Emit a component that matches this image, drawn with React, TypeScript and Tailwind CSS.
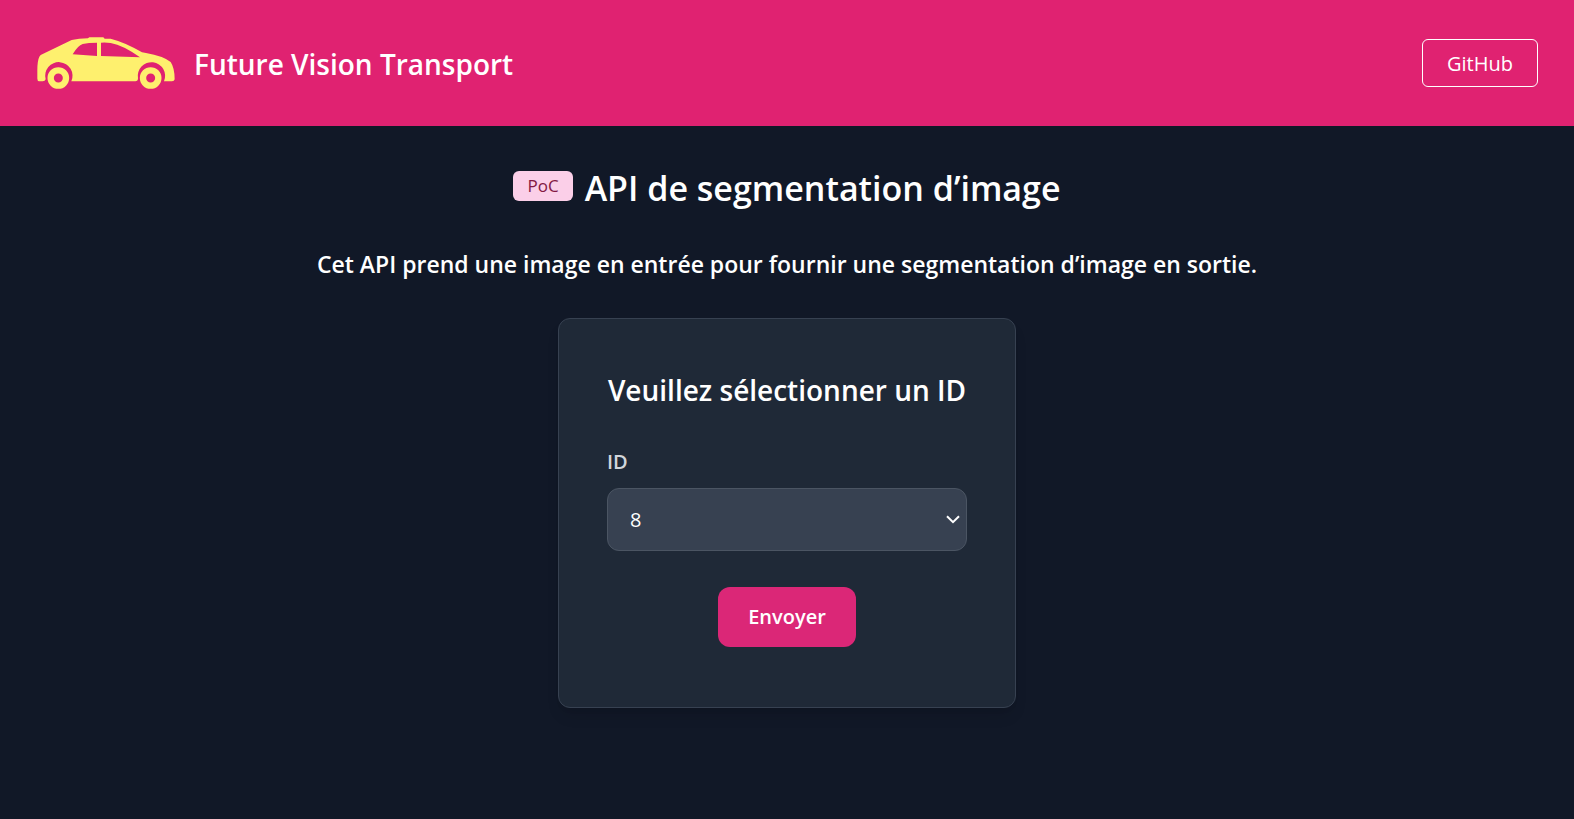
import { useState } from "react";
import type { FormEvent } from "react";

const ids = Array.from({ length: 20 }, (_, i) => String(i + 1));

function CarLogo() {
  return (
    <svg viewBox="48 48 420 162" className="h-[54px] w-[140px] shrink-0" aria-hidden="true">
      <path
        fillRule="evenodd"
        fill="#fef06e"
        d="M62 105 L155 60 Q176 56 204 55 L208 52 L250 52 L254 56 L272 56 Q318 68 366 97 L378 99 Q430 108 452 126 Q464 144 464 178 Q463 184 456 184 L432 184 A41 41 0 1 0 354 175 Q354 184 346 184 L154 184 A41 41 0 1 0 77 178 Q75 184 68 184 L58 184 Q52 184 52 176 L52 150 Q52 122 58 110 Z M158 103 L231 108 L231 68 Q205 68 188 72 Q174 76 158 103 Z M243 68 L243 108 L360 112 Q310 76 272 69 Q258 67 243 68 Z"
      />
      <circle cx="115" cy="174" r="23" fill="none" stroke="#fef06e" strokeWidth="19" />
      <circle cx="392" cy="174" r="23" fill="none" stroke="#fef06e" strokeWidth="19" />
    </svg>
  );
}

export default function App() {
  const [id, setId] = useState("8");
  const submit = (e: FormEvent) => e.preventDefault();

  return (
    <div className="min-h-screen bg-[#111827] font-['Segoe_UI','Open_Sans',sans-serif] text-white">
      <header className="flex items-center justify-between bg-[#e02271] px-9 py-9">
        <div className="flex items-center gap-[18px]">
          <CarLogo />
          <span className="pt-0.5 text-[28px] leading-9 font-semibold">Future Vision Transport</span>
        </div>
        <a
          href="https://github.com"
          className="rounded-md border border-white px-6 pt-[9px] pb-[7px] text-[20px] leading-[30px]"
        >
          GitHub
        </a>
      </header>

      <main className="flex flex-col items-center px-9 pt-9 pb-12">
        <div className="flex items-start gap-3">
          <span className="mt-[9px] rounded-md bg-[#fbcfe8] px-[14px] py-[3px] text-[17px] leading-6 text-[#831843]">
            PoC
          </span>
          <h1 className="text-[34px] leading-[52px] font-semibold">API de segmentation d’image</h1>
        </div>
        <p className="mt-8 text-center text-[23px] leading-9 font-semibold">
          Cet API prend une image en entrée pour fournir une segmentation d’image en sortie.
        </p>

        <form
          onSubmit={submit}
          className="mt-9 flex w-full max-w-[458px] flex-col rounded-xl border border-[#374151] bg-[#1f2937] px-12 pt-12 pb-[60px] shadow-lg"
        >
          <h2 className="text-center text-[28px] leading-[46px] font-semibold whitespace-nowrap">
            Veuillez sélectionner un ID
          </h2>
          <label htmlFor="image-id" className="mt-[34px] text-[20px] leading-[30px] font-semibold text-[#d1d5db]">
            ID
          </label>
          <div className="mt-[11px] grid items-center">
            <select
              id="image-id"
              value={id}
              onChange={(e) => setId(e.target.value)}
              className="col-start-1 row-start-1 h-[63px] appearance-none rounded-xl border border-[#4b5563] bg-[#374151] px-[22px] text-[20px]"
            >
              {ids.map((n) => (
                <option key={n}>{n}</option>
              ))}
            </select>
            <svg
              viewBox="0 0 14 9"
              className="pointer-events-none col-start-1 row-start-1 mr-[7px] h-[9px] w-[14px] justify-self-end"
              aria-hidden="true"
            >
              <path d="M1 1.2 L7 7.2 L13 1.2" fill="none" stroke="white" strokeWidth="2" />
            </svg>
          </div>
          <button
            type="submit"
            className="mt-9 self-center rounded-xl bg-[#db2777] px-[30px] py-[15px] text-[20px] leading-[30px] font-semibold"
          >
            Envoyer
          </button>
        </form>
      </main>
    </div>
  );
}
